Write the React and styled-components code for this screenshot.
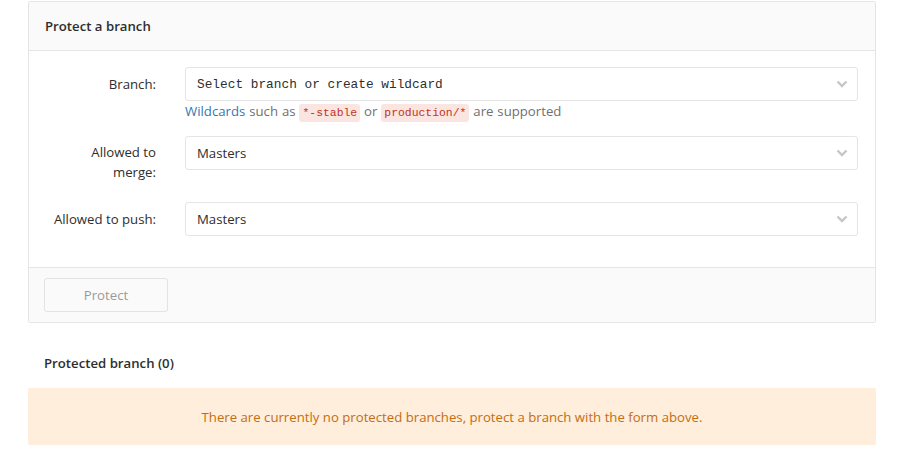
import React from "react"
import styled, { createGlobalStyle } from "styled-components"

const GlobalStyle = createGlobalStyle`
  body {
    margin: 0;
    background: #fff;
    font-family: "Open Sans", "Noto Sans", sans-serif;
    font-size: 13.2px;
    color: #2e2e2e;
  }
`

const Page = styled.div`
  padding: 1px 22px 0 28px;
`

const Panel = styled.div`
  border: 1px solid #e5e5e5;
  border-radius: 2px;
`

const PanelHeader = styled.div`
  height: 48px;
  display: flex;
  align-items: center;
  padding: 0 16px;
  background: #fafafa;
  border-bottom: 1px solid #e5e5e5;
  font-weight: 600;
`

const PanelBody = styled.div`
  padding: 16px 17px 31px 15px;
  display: grid;
  grid-template-columns: 112px 1fr;
  column-gap: 29px;
  align-items: start;
`

const Label = styled.label`
  text-align: right;
  line-height: 20px;
  padding-left: 7px;
  padding-top: ${p => p.$wrap ? "6px" : "7px"};
`

const Field = styled.div`
  margin-bottom: ${p => p.$gap || "32px"};
`

const SelectBox = styled.div`
  height: 32px;
  border: 1px solid #e5e5e5;
  border-radius: 3px;
  display: flex;
  align-items: center;
  justify-content: space-between;
  padding: 0 9px 0 11px;
  background: #fff;
  font-family: ${p => p.$mono ? `"Liberation Mono", "DejaVu Sans Mono", monospace` : "inherit"};
  font-size: ${p => p.$mono ? "12.8px" : "13.2px"};
`

const Help = styled.div`
  height: 20px;
  line-height: 20px;
  color: #707070;
  word-spacing: 0.5px;
`

const Link = styled.span`
  color: #3777b0;
`

const Code = styled.code`
  font-family: "Liberation Mono", "DejaVu Sans Mono", monospace;
  font-size: 11.4px;
  line-height: 16px;
  display: inline-block;
  background: #fbe5e1;
  color: #c0341d;
  padding: 1px 3px;
  border-radius: 3px;
`

const PanelFooter = styled.div`
  padding: 10px 15px;
  background: #fafafa;
  border-top: 1px solid #e5e5e5;
`

const Button = styled.button`
  display: block;
  width: 124px;
  height: 34px;
  border: 1px solid #e3e3e3;
  border-radius: 3px;
  background: #fafafa;
  color: #9a9a9a;
  font-family: inherit;
  font-size: 13.2px;
`

const SectionTitle = styled.h5`
  margin: 30px 0 0;
  padding: 0 16px;
  height: 20px;
  line-height: 20px;
  font-size: 13.2px;
  font-weight: 600;
`

const Alert = styled.div`
  margin-top: 15px;
  height: 57px;
  display: flex;
  align-items: center;
  justify-content: center;
  background: #feeedb;
  color: #c46d12;
  border-radius: 2px;
`

const Chevron = () => (
  <svg width="12" height="8" viewBox="0 0 12 8">
    <path d="M1.5 1.5 L6 6 L10.5 1.5" fill="none" stroke="#c6c6c6" strokeWidth="2.4" />
  </svg>
)

export default function App() {
  return (
    <Page>
      <GlobalStyle />
      <Panel>
        <PanelHeader>Protect a branch</PanelHeader>
        <PanelBody>
          <Label>Branch:</Label>
          <Field $gap="15px">
            <SelectBox $mono>
              <span>Select branch or create wildcard</span>
              <Chevron />
            </SelectBox>
            <Help>
              <Link>Wildcards</Link> such as <Code>*-stable</Code> or <Code>production/*</Code> are supported
            </Help>
          </Field>

          <Label $wrap>Allowed to merge:</Label>
          <Field>
            <SelectBox>
              <span>Masters</span>
              <Chevron />
            </SelectBox>
          </Field>

          <Label>Allowed to push:</Label>
          <Field $gap="0">
            <SelectBox>
              <span>Masters</span>
              <Chevron />
            </SelectBox>
          </Field>
        </PanelBody>
        <PanelFooter>
          <Button disabled>Protect</Button>
        </PanelFooter>
      </Panel>

      <SectionTitle>Protected branch (0)</SectionTitle>
      <Alert>There are currently no protected branches, protect a branch with the form above.</Alert>
    </Page>
  )
}
